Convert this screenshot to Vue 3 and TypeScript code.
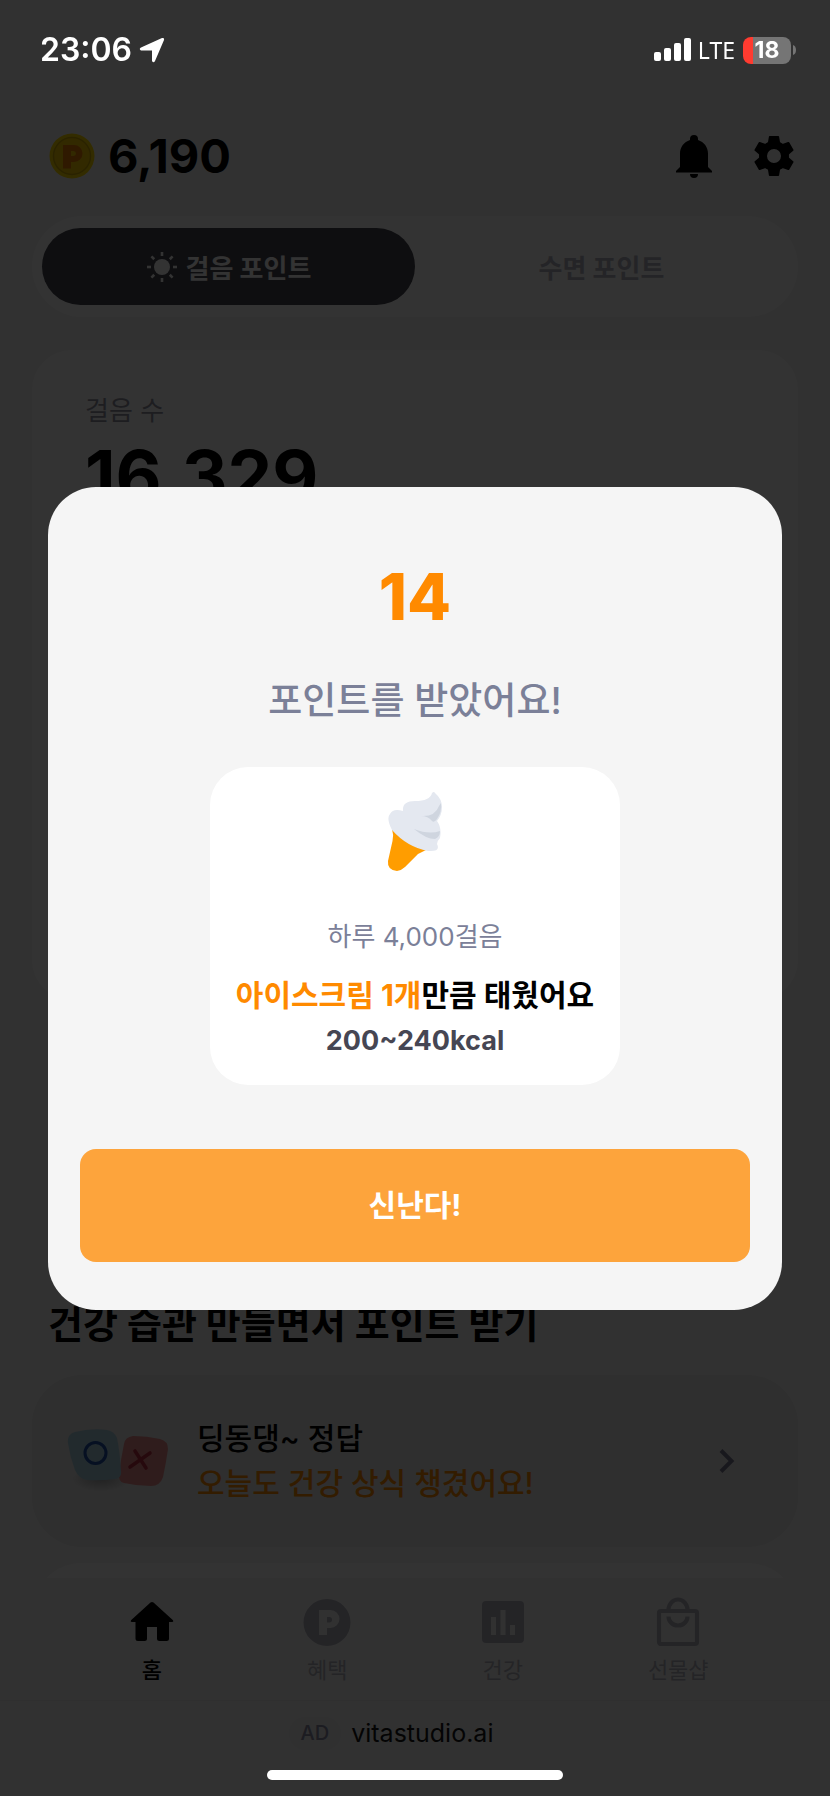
<script setup lang="ts">
import { ref } from 'vue'

interface NavItem {
  id: 'home' | 'benefit' | 'health' | 'shop'
  label: string
}

const navItems: NavItem[] = [
  { id: 'home', label: '홈' },
  { id: 'benefit', label: '혜택' },
  { id: 'health', label: '건강' },
  { id: 'shop', label: '선물샵' },
]

const activeTab = ref<'walk' | 'sleep'>('walk')
const activeNav = ref<NavItem['id']>('home')
const dialogOpen = ref(true)
const balance = (6190).toLocaleString('en-US')
const steps = (16329).toLocaleString('en-US')
const rays = [0, 45, 90, 135, 180, 225, 270, 315]
const teeth = [0, 60, 120, 180, 240, 300]
</script>

<template>
  <div class="app">
    <div class="screen">
      <header class="header">
        <div class="balance">
          <svg class="coin" viewBox="0 0 46 46" aria-hidden="true">
            <circle cx="23" cy="23" r="22.5" fill="#ffdc00" />
            <circle cx="23" cy="23" r="18.5" fill="#f8cc00" stroke="#d0ac00" stroke-width="1.5" />
            <path
              d="M14 12h11a8.500 8.500 0 0 1 0 17H22v6.500h-8z M22 18v5h2.500a2.500 2.500 0 0 0 0-5z"
              fill="#ea7c00"
              fill-rule="evenodd"
            />
          </svg>
          <span>{{ balance }}</span>
        </div>
        <div class="actions">
          <button type="button" class="icon-button" aria-label="알림">
            <svg viewBox="0 0 48 48" aria-hidden="true">
              <path
                d="M24 3a4 4 0 0 1 4 4v1c6 2 10 7 10 13.500V35l4 4v1.500H6V39l4-4V21.500C10 15 14 10 20 8V7a4 4 0 0 1 4-4z"
              />
              <path d="M20 42h8a4 4 0 0 1-8 0z" />
            </svg>
          </button>
          <button type="button" class="icon-button" aria-label="설정">
            <svg viewBox="0 0 48 48" aria-hidden="true">
              <g v-for="angle in teeth" :key="angle" :transform="`rotate(${angle} 24 24)`">
                <path d="M19.700 4h8.600q.7 0 .8.800L30.500 13h-13l1.400-8.200q.1-.8.800-.8z" />
              </g>
              <circle cx="24" cy="24" r="11" fill="none" stroke="#000" stroke-width="8" />
            </svg>
          </button>
        </div>
      </header>

      <main class="content">
        <div class="tabs" role="tablist">
          <button
            type="button"
            role="tab"
            class="tab"
            :class="{ selected: activeTab === 'walk' }"
            :aria-selected="activeTab === 'walk'"
            @click="activeTab = 'walk'"
          >
            <svg class="sun" viewBox="0 0 32 32" aria-hidden="true">
              <circle cx="16" cy="16" r="8" fill="currentColor" />
              <path
                v-for="angle in rays"
                :key="angle"
                :transform="`rotate(${angle} 16 16)`"
                d="M16 1v4"
                stroke="currentColor"
                stroke-width="2.600"
              />
            </svg>
            걸음 포인트
          </button>
          <button
            type="button"
            role="tab"
            class="tab"
            :class="{ selected: activeTab === 'sleep' }"
            :aria-selected="activeTab === 'sleep'"
            @click="activeTab = 'sleep'"
          >
            수면 포인트
          </button>
        </div>

        <section class="steps">
          <p class="steps-label">걸음 수</p>
          <p class="steps-value">{{ steps }}</p>
        </section>

        <h2 class="section-title">건강 습관 만들면서 포인트 받기</h2>

        <a class="quiz" href="#quiz">
          <svg class="quiz-art" viewBox="0 0 104 64" aria-hidden="true">
            <defs>
              <radialGradient id="tile-shadow">
                <stop offset="0" stop-color="#808080" stop-opacity=".6" />
                <stop offset="1" stop-color="#808080" stop-opacity="0" />
              </radialGradient>
            </defs>
            <ellipse cx="34" cy="50" rx="28" ry="12" fill="url(#tile-shadow)" />
            <path
              d="M66 7Q80 7 93 10 101 12 101 20 99 34 96 48 93 57 84 57 70 57 57 54 51 53 52 44 54 30 57 15 58 8 66 7z"
              fill="#eb8c8c"
            />
            <path
              d="M8 3Q24-1 40 1 47 2 50 9 53 24 54 42 55 49 48 50 34 52 20 51 12 50 8 41 3 28 1 14 0 5 8 3z"
              fill="#a9d0e2"
            />
            <circle cx="28.5" cy="24" r="10.500" fill="none" stroke="#1e50a8" stroke-width="3" />
            <path
              d="M68 22 79 39M83 24 63 38"
              fill="none"
              stroke="#bd3142"
              stroke-width="3.600"
              stroke-linecap="round"
            />
          </svg>
          <span class="quiz-text">
            <span>딩동댕~ 정답</span>
            <span class="quiz-sub">오늘도 건강 상식 챙겼어요!</span>
          </span>
          <svg class="chevron" viewBox="0 0 16 26" aria-hidden="true">
            <path d="M2 2.500 12.500 13 2 23.500" fill="none" stroke="currentColor" stroke-width="4" />
          </svg>
        </a>

        <div class="next-card"></div>
      </main>

      <nav class="nav">
        <a
          v-for="item in navItems"
          :key="item.id"
          class="nav-item"
          :class="{ current: activeNav === item.id }"
          :href="`#${item.id}`"
          @click="activeNav = item.id"
        >
          <svg viewBox="0 0 52 52" aria-hidden="true">
            <path
              v-if="item.id === 'home'"
              d="M24.500 6.600q1.500-1.200 3 0L47 24.200q1 1.600-.8 1.900H43V42.500q0 2.500-2.500 2.500H33.500q-2.500 0-2.500-2.500V31H21V42.500q0 2.500-2.500 2.500H12q-2.500 0-2.500-2.500V26.100H5.800q-1.800-.3-.8-1.900z"
              fill="currentColor"
            />
            <path
              v-else-if="item.id === 'benefit'"
              fill="currentColor"
              fill-rule="evenodd"
              d="M26 3a23.500 23.500 0 1 0 0 47 23.500 23.500 0 1 0 0-47zM18 14h11.500a9 9 0 0 1 0 18H26v7h-8zM26 21v5.500h2.300a2.750 2.750 0 0 0 0-5.500z"
            />
            <path
              v-else-if="item.id === 'health'"
              fill="currentColor"
              fill-rule="evenodd"
              d="M9 5h34q4 0 4 4v34q0 4-4 4H9q-4 0-4-4V9q0-4 4-4zM14 21v18h5V21zM23.500 14v25h5V14zM33 29v10h5V29z"
            />
            <g v-else fill="none" stroke="currentColor" stroke-width="4.200">
              <rect x="7" y="15" width="38" height="33" rx="2" />
              <path d="M16.500 14a9.500 10.500 0 0 1 19 0M16.500 20.500a9.500 9 0 0 0 19 0" />
            </g>
          </svg>
          {{ item.label }}
        </a>
      </nav>

      <footer class="ad">
        <span class="ad-badge">AD</span>
        <a class="ad-link" href="#ad">vitastudio.ai</a>
      </footer>
    </div>

    <div v-if="dialogOpen" class="overlay">
      <div class="dialog" role="dialog" aria-modal="true" aria-labelledby="dialog-title">
        <p class="reward">14</p>
        <h1 id="dialog-title" class="dialog-title">포인트를 받았어요!</h1>
        <div class="burn">
          <svg class="ice-cream" viewBox="0 0 56 80" aria-hidden="true">
            <path
              d="M5 38Q7 44 5.500 50L1 70Q0 79 10 80q5-1 8-4L31 63l8-4 2-5z"
              fill="#ff9d00"
            />
            <path
              d="M45 2q2-2 3 0 7 6 7 14 0 8-5 14 5 7 3 17-3 3-3 6 4 8-9 7Q20 56 5 39-1 27 3 23q3-6 13-3-1-10 12-10 15 0 17-8z"
              fill="#e4e8f0"
            />
            <path d="M54 12q1 9-4 16-3 4-5 2-4-5-11-5 14 1 18-10z" fill="#cfd5df" />
            <path d="M27 38q15 6 26 2 0 6-5 8-9 0-21-10z" fill="#cfd5df" />
          </svg>
          <p class="burn-steps">하루 4,000걸음</p>
          <p class="burn-result"><em>아이스크림 1개</em>만큼 태웠어요</p>
          <p class="burn-kcal">200~240kcal</p>
        </div>
        <button type="button" class="confirm" @click="dialogOpen = false">신난다!</button>
      </div>
    </div>

    <div class="status">
      <div class="status-left">
        <span class="time">23:06</span>
        <svg class="location" viewBox="0 0 26 26" aria-hidden="true">
          <path d="M23 1q2.500-.6 2 2L16 24q-1.500 2.500-3 0V13.500H2Q-.5 12 2 10.500z" fill="#fff" />
        </svg>
      </div>
      <div class="status-right">
        <svg class="signal" viewBox="0 0 38 24" aria-hidden="true">
          <g fill="#fff">
            <rect x="0" y="14" width="7" height="9" rx="2" />
            <rect x="10" y="10" width="7" height="13" rx="2" />
            <rect x="20" y="5" width="7" height="18" rx="2" />
            <rect x="30" y="0" width="7" height="23" rx="2" />
          </g>
        </svg>
        <span class="carrier">LTE</span>
        <span class="battery">18</span>
        <svg class="battery-tip" viewBox="0 0 3 10" aria-hidden="true">
          <path d="M0 0q3 1 3 5t-3 5z" fill="#757575" />
        </svg>
      </div>
    </div>
    <div class="home-indicator"></div>
  </div>
</template>

<style>
body {
  background: #313131;
}
</style>

<style scoped>
.app {
  position: relative;
  font-family: Inter, 'Noto Sans CJK KR', sans-serif;
  color: #000;
}
.app *,
.app {
  box-sizing: border-box;
}
p,
h1,
h2 {
  margin: 0;
}
button {
  border: 0;
  font-family: inherit;
  cursor: pointer;
}
a {
  color: inherit;
  text-decoration: none;
}
svg {
  display: block;
  flex: none;
}
.screen {
  display: flex;
  flex-direction: column;
  height: 100vh;
  background: #f5f5f5;
}
.header {
  display: flex;
  align-items: center;
  justify-content: space-between;
  flex: none;
  padding: 122px 32px 26px 49px;
}
.balance {
  display: flex;
  align-items: center;
  gap: 13px;
  font-size: 47px;
  line-height: 68px;
  font-weight: 700;
}
.coin {
  width: 46px;
  height: 46px;
}
.actions {
  display: flex;
  gap: 32px;
}
.icon-button {
  padding: 0;
  background: none;
}
.icon-button svg {
  width: 48px;
  height: 48px;
}
.content {
  flex: 1;
  min-height: 0;
  overflow: hidden;
  padding: 0 32px;
}
.tabs {
  display: grid;
  grid-template-columns: 1fr 1fr;
  padding: 12px 10px;
  border-radius: 52px;
  background: #fff;
}
.tab {
  display: flex;
  align-items: center;
  justify-content: center;
  gap: 8px;
  height: 77px;
  border-radius: 39px;
  background: transparent;
  color: #b6b6c0;
  font-size: 26px;
  font-weight: 700;
}
.tab.selected {
  background: #45454f;
  color: #fff;
}
.sun {
  width: 32px;
  height: 32px;
}
.steps {
  min-height: 650px;
  margin-top: 33px;
  padding: 40px 53px;
  border-radius: 40px;
  background: #fff;
}
.steps-label {
  color: #9292a2;
  font-size: 26px;
  line-height: 42px;
}
.steps-value {
  font-size: 71px;
  line-height: 88px;
  font-weight: 700;
}
.section-title {
  margin: 297px 16px 24px;
  font-size: 38px;
  line-height: 54px;
  font-weight: 700;
}
.quiz {
  display: flex;
  align-items: center;
  padding: 41px 63px 41px 35px;
  border-radius: 50px;
  background: #e8e8e8;
}
.quiz-art {
  width: 104px;
  height: 64px;
}
.quiz-text {
  display: flex;
  flex: 1;
  flex-direction: column;
  margin-left: 26px;
  font-size: 30px;
  line-height: 45px;
  font-weight: 500;
}
.quiz-sub {
  color: #ff8a00;
}
.chevron {
  width: 16px;
  height: 26px;
  color: #7a7a92;
}
.next-card {
  height: 172px;
  margin-top: 16px;
  border-radius: 50px;
  background: #fff;
}
.nav {
  display: grid;
  grid-template-columns: repeat(4, 1fr);
  flex: none;
  padding: 18px 64px 14px;
  border-bottom: 1px solid #e8e8e8;
  background: #f5f5f5;
}
.nav-item {
  display: flex;
  flex-direction: column;
  align-items: center;
  gap: 6px;
  color: #b4b4be;
  font-size: 22px;
  line-height: 32px;
}
.nav-item.current {
  color: #000;
  font-weight: 500;
}
.nav-item svg {
  width: 52px;
  height: 52px;
}
.ad {
  display: flex;
  justify-content: center;
  flex: none;
  gap: 10px;
  padding: 16px 48px 46px 0;
  font-size: 25px;
  line-height: 33px;
}
.ad-badge {
  padding: 0 12px;
  border-radius: 16px;
  background: #ededf0;
  color: #8a8aa4;
  font-size: 20px;
  font-weight: 500;
}
.ad-link {
  color: #141414;
}
.overlay {
  position: fixed;
  inset: 0;
  display: flex;
  align-items: center;
  padding: 0 48px;
  background: rgba(0, 0, 0, 0.8);
}
.dialog {
  display: flex;
  flex: 1;
  flex-direction: column;
  align-items: center;
  padding: 70px 32px 48px;
  border-radius: 48px;
  background: #f5f5f5;
}
.reward {
  color: #ff8a00;
  font-size: 64px;
  line-height: 80px;
  font-weight: 800;
}
.dialog-title {
  margin: 36px 0 38px;
  color: #7b8098;
  font-size: 37px;
  line-height: 56px;
  font-weight: 500;
}
.burn {
  display: flex;
  flex-direction: column;
  align-items: center;
  padding: 24px 26px 22px;
  border-radius: 38px;
  background: #fff;
}
.ice-cream {
  width: 56px;
  height: 80px;
  margin-bottom: 46px;
}
.burn-steps {
  color: #7b8098;
  font-size: 26px;
  line-height: 40px;
}
.burn-result {
  margin-top: 14px;
  font-size: 30px;
  line-height: 48px;
  font-weight: 700;
}
.burn-result em {
  color: #ff8a00;
  font-style: normal;
}
.burn-kcal {
  color: #464653;
  font-size: 27px;
  line-height: 44px;
  font-weight: 700;
}
.confirm {
  width: 100%;
  margin-top: 64px;
  padding: 32px;
  border-radius: 16px;
  background: #fda43c;
  color: #fff;
  font-size: 30px;
  line-height: 49px;
  font-weight: 700;
}
.status {
  position: fixed;
  inset: 0 0 auto;
  display: flex;
  align-items: center;
  justify-content: space-between;
  padding: 30px 34px 30px 40px;
  color: #fff;
}
.status-left,
.status-right {
  display: flex;
  align-items: center;
}
.status-left {
  gap: 7px;
}
.time {
  font-size: 32px;
  line-height: 40px;
  font-weight: 600;
}
.location {
  width: 26px;
  height: 26px;
}
.signal {
  width: 38px;
  height: 24px;
}
.carrier {
  margin: 0 8px 0 6px;
  font-family: 'Noto Sans', sans-serif;
  font-size: 23px;
  line-height: 28px;
}
.battery {
  width: 48px;
  border-radius: 8px;
  background: linear-gradient(90deg, #ff3b30 20%, #757575 20%);
  font-size: 23px;
  line-height: 27px;
  font-weight: 700;
  text-align: center;
}
.battery-tip {
  width: 3px;
  height: 10px;
  margin-left: 2px;
}
.home-indicator {
  position: fixed;
  bottom: 16px;
  left: 50%;
  width: 296px;
  height: 10px;
  margin-left: -148px;
  border-radius: 5px;
  background: #fff;
}
</style>
